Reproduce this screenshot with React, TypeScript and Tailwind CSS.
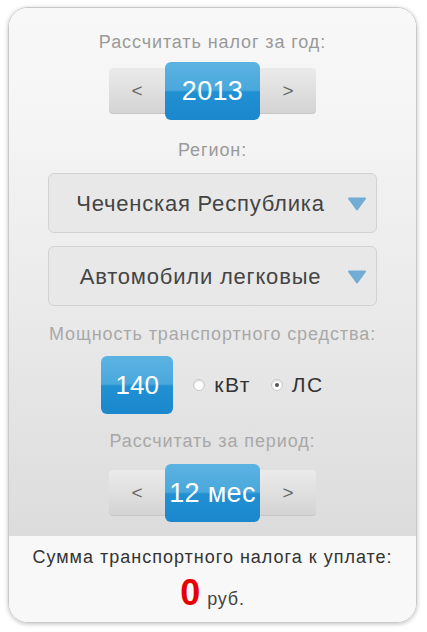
import React, { useState } from 'react';

const Stepper: React.FC<{ value: string; onPrev: () => void; onNext: () => void }> = ({ value, onPrev, onNext }) => (
  <div className="flex items-center justify-center">
    <button
      onClick={onPrev}
      className="w-[56px] h-[46px] rounded-l-[4px] bg-gradient-to-b from-[#ebebeb] to-[#d3d3d3] text-[#666] text-[19px] shadow-[inset_0_-1px_0_rgba(0,0,0,0.06)]"
    >
      &lt;
    </button>
    <div className="w-[95px] h-[58px] rounded-[6px] bg-[linear-gradient(to_bottom,#5cb3e2_0%,#4aa8dc_48%,#2190d3_52%,#1b87cc_100%)] flex items-center justify-center text-white text-[27px] leading-none tracking-[0.3px]">
      {value}
    </div>
    <button
      onClick={onNext}
      className="w-[56px] h-[46px] rounded-r-[4px] bg-gradient-to-b from-[#ebebeb] to-[#d3d3d3] text-[#666] text-[19px] shadow-[inset_0_-1px_0_rgba(0,0,0,0.06)]"
    >
      &gt;
    </button>
  </div>
);

const Select: React.FC<{ label: string }> = ({ label }) => (
  <div className="mx-[39px] h-[60px] rounded-[6px] border border-[#d2d2d2] bg-[#e8e8e8] flex items-center relative">
    <span className="flex-1 text-center pr-[24px] text-[22px] tracking-[0.8px] text-[#444]">{label}</span>
    <svg className="absolute right-[9px] top-[23px]" width="20" height="14" viewBox="0 0 20 14">
      <path d="M2 1.5 L18 1.5 L10 12.5 Z" fill="#71acd4" stroke="#71acd4" strokeWidth="2" strokeLinejoin="round" />
    </svg>
  </div>
);

const Radio: React.FC<{ checked: boolean; label: string; onClick: () => void }> = ({ checked, label, onClick }) => (
  <button onClick={onClick} className="flex items-center gap-[9px]">
    <span className="w-[12px] h-[12px] rounded-full border border-[#c8c8c8] bg-white shadow-[inset_0_1px_2px_rgba(0,0,0,0.15)] flex items-center justify-center">
      {checked && <span className="w-[4px] h-[4px] rounded-full bg-[#555]" />}
    </span>
    <span className="text-[21px] tracking-[1.5px] text-[#333]">{label}</span>
  </button>
);

const App: React.FC = () => {
  const [year, setYear] = useState(2013);
  const [months, setMonths] = useState(12);
  const [unit, setUnit] = useState('hp');

  return (
    <div className="min-h-[632px] bg-white pt-[7px] font-['Liberation_Sans',Arial,sans-serif]">
      <div className="mx-[8px] w-[409px] h-[616px] rounded-[20px] border border-[#c9c9c9] shadow-[0_1px_4px_rgba(0,0,0,0.25)] overflow-hidden flex flex-col">
        {/* Calculator body */}
        <div className="flex-1 bg-[linear-gradient(to_bottom,#f8f8f8_0%,#f5f5f5_20%,#e9e9e9_60%,#dcdcdc_100%)] pt-[24px]">
          <div className="text-center text-[18px] leading-[20px] tracking-[0.9px] text-[#9a9a9a]">Рассчитать налог за год:</div>
          <div className="mt-[10px]">
            <Stepper value={String(year)} onPrev={() => setYear(year - 1)} onNext={() => setYear(year + 1)} />
          </div>

          <div className="mt-[20px] text-center text-[18px] leading-[20px] tracking-[0.9px] text-[#9a9a9a]">Регион:</div>
          <div className="mt-[13px] space-y-[13px]">
            <Select label="Чеченская Республика" />
            <Select label="Автомобили легковые" />
          </div>

          <div className="mt-[18px] text-center text-[18px] leading-[20px] tracking-[0.9px] text-[#a8a8a8]">Мощность транспортного средства:</div>
          <div className="mt-[12px] flex items-center justify-center">
            <div className="w-[72px] h-[58px] rounded-[6px] bg-[linear-gradient(to_bottom,#5cb3e2_0%,#4aa8dc_48%,#2190d3_52%,#1b87cc_100%)] flex items-center justify-center text-white text-[26px]">
              140
            </div>
            <div className="ml-[20px] flex items-center gap-[20px]">
              <Radio checked={unit === 'kw'} label="кВт" onClick={() => setUnit('kw')} />
              <Radio checked={unit === 'hp'} label="ЛС" onClick={() => setUnit('hp')} />
            </div>
          </div>

          <div className="mt-[17px] text-center text-[18px] leading-[20px] tracking-[0.9px] text-[#a8a8a8]">Рассчитать за период:</div>
          <div className="mt-[13px]">
            <Stepper
              value={`${months} мес`}
              onPrev={() => setMonths(Math.max(1, months - 1))}
              onNext={() => setMonths(Math.min(12, months + 1))}
            />
          </div>
        </div>

        {/* Result */}
        <div className="h-[86px] bg-[#f8f8f8] pt-[11px] text-center">
          <div className="text-[18px] leading-[20px] tracking-[1px] text-[#333]">Сумма транспортного налога к уплате:</div>
          <div className="mt-[6px] flex items-baseline justify-center gap-[7px]">
            <span className="text-[36px] leading-[40px] font-bold text-[#e60000]">0</span>
            <span className="text-[18px] tracking-[0.8px] text-[#444]">руб.</span>
          </div>
        </div>
      </div>
    </div>
  );
};

export default App;
